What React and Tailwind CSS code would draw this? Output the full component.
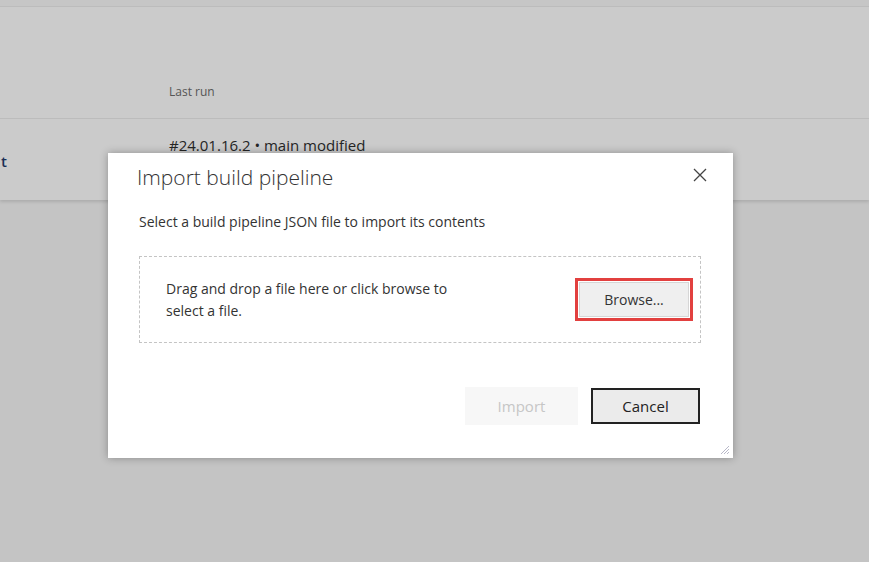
export default function App() {
  const font = { fontFamily: '"Segoe UI", "Open Sans", "Noto Sans", sans-serif' };
  return (
    <div className="relative w-[869px] h-[562px] overflow-hidden bg-[#c4c4c4]" style={font}>
      <div className="h-[7px] bg-[#c6c6c6] border-b border-[#bdbdbd]" />
      <div className="bg-[#cbcbcb] shadow-[0_2px_3px_rgba(0,0,0,0.12)]">
        <div className="h-[112px] flex items-end border-b border-[#bcbcbc] pl-[169px] pb-[17px]">
          <span className="text-[12px] text-[#555]">Last run</span>
        </div>
        <div className="h-[81px] flex items-start">
          <div className="w-[169px] pt-[31px] pl-[1px] text-[15px] font-semibold text-[#1b2f55]">t</div>
          <div className="pt-[15px] text-[15px] text-[#252525]">#24.01.16.2 • main modified</div>
        </div>
      </div>

      <div className="absolute left-[108px] top-[153px] w-[625px] h-[305px] bg-white shadow-[0_0_8px_rgba(0,0,0,0.3)]">
        <div className="flex items-start justify-between pl-[29px] pr-[23px] pt-[9px]">
          <h2 className="text-[21px] font-light text-[#333] leading-[30px]">Import build pipeline</h2>
          <button className="mt-[3px] w-[20px] h-[20px] flex items-center justify-center text-[#444]">
            <svg width="14" height="14" viewBox="0 0 14 14" fill="none" stroke="currentColor" strokeWidth="1.3">
              <path d="M1 1L13 13M13 1L1 13" />
            </svg>
          </button>
        </div>
        <div className="pl-[31px] pr-[32px]">
          <p className="mt-[20px] text-[14px] text-[#333] leading-[20px]">Select a build pipeline JSON file to import its contents</p>
          <div className="mt-[24px] h-[87px] border border-dashed border-[#c4c4c4] flex items-center justify-between pl-[26px] pr-[7px]">
            <p className="w-[310px] text-[14px] text-[#333] leading-[22px]">Drag and drop a file here or click browse to select a file.</p>
            <div className="border-[3px] border-[#e2403f] p-[1px]">
              <button className="w-[110px] h-[35px] bg-[#efefef] border border-[#d6d6d6] text-[14px] text-[#333]">Browse...</button>
            </div>
          </div>
          <div className="mt-[44px] flex justify-end gap-[13px] pr-[1px]">
            <button className="w-[113px] h-[38px] bg-[#f7f7f7] text-[15px] text-[#c6c6c6]">Import</button>
            <button className="w-[109px] h-[36px] mt-[1px] bg-[#ebebeb] border-2 border-[#222] text-[15px] text-[#222]">Cancel</button>
          </div>
        </div>
        <svg className="absolute right-[3px] bottom-[3px]" width="10" height="10" viewBox="0 0 10 10" stroke="#b9b9c9" strokeWidth="1">
          <path d="M9 1L1 9M9 4L4 9M9 7L7 9" />
        </svg>
      </div>
    </div>
  );
}
